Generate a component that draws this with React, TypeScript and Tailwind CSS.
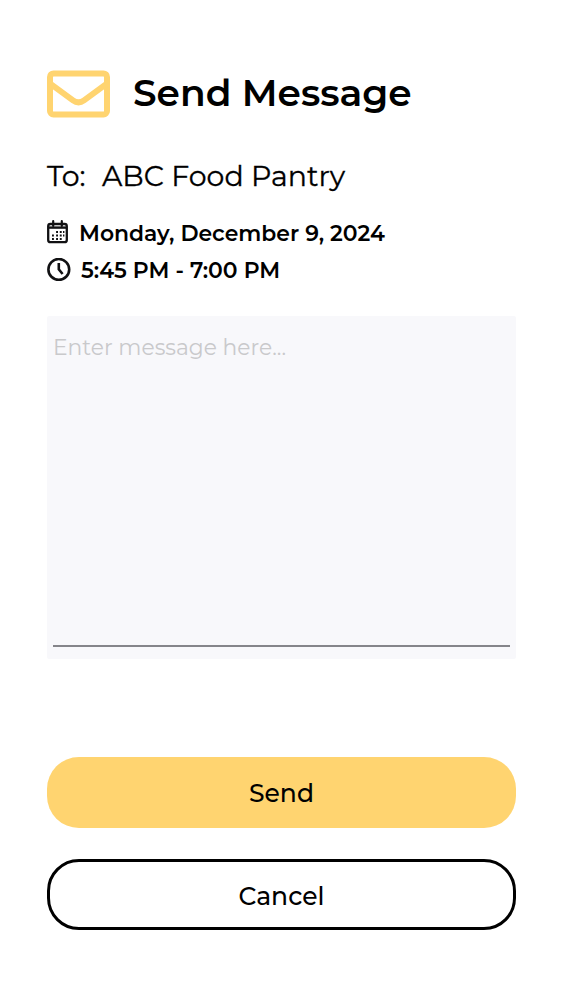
import React, { useState } from "react";

function EnvelopeIcon() {
  return (
    <svg className="h-[48px] w-[63px] shrink-0" viewBox="0 0 63 48" fill="none" stroke="#ffd470" strokeWidth="6">
      <rect x="3" y="3.4" width="57" height="41" rx="3.5" />
      <path d="M3.5 13.8 L26 30.4 Q31.5 34.4 37 30.4 L59.5 13.8" strokeWidth="6" />
    </svg>
  );
}

function CalendarIcon() {
  return (
    <svg className="h-[24px] w-[21px] shrink-0" viewBox="0 0 21 24" fill="none" stroke="#111113">
      <rect x="1.2" y="4" width="18.6" height="18.2" rx="2.2" strokeWidth="2.3" />
      <path d="M1 7.6 H20" strokeWidth="2.4" />
      <path d="M6.2 1.2 V6 M14.8 1.2 V6" strokeWidth="2.2" strokeLinecap="round" />
      <path
        d="M9.1 12 H11 M12.8 12 H14.7 M16 12 H17.4 M5 15.5 H6.9 M9.1 15.5 H11 M12.8 15.5 H14.7 M16 15.5 H17.4 M5 19 H6.9 M9.1 19 H11 M12.8 19 H14.7"
        strokeWidth="1.9"
      />
    </svg>
  );
}

function ClockIcon() {
  return (
    <svg className="h-[24px] w-[24px] shrink-0" viewBox="0 0 24 24" fill="none" stroke="#111113" strokeWidth="2.6">
      <circle cx="11.8" cy="11.4" r="10.4" />
      <path d="M11.8 5 V11.4 L15.6 16" strokeWidth="2.6" />
    </svg>
  );
}

export default function App() {
  const [message, setMessage] = useState("");

  const handleSubmit = (e: React.FormEvent) => {
    e.preventDefault();
  };

  return (
    <div className="min-h-[1000px] w-full bg-white px-[47px] pt-[70px] font-['Montserrat','Inter',sans-serif] text-black">
      <div className="flex h-[48px] items-center">
        <EnvelopeIcon />
        <h1 className="ml-[23px] -mt-[2px] whitespace-nowrap text-[37.5px] leading-[48px] font-semibold">
          Send Message
        </h1>
      </div>

      <div className="mt-[38px] flex h-[40px] items-center whitespace-nowrap text-[28.4px] leading-[40px] [-webkit-text-stroke:0.3px_black]">
        <span className="w-[55px] shrink-0">To:</span>
        <span>ABC Food Pantry</span>
      </div>

      <div className="mt-[21px] flex h-[30px] items-center whitespace-nowrap text-[21.9px] leading-[30px] font-semibold">
        <CalendarIcon />
        <span className="mt-[2px] ml-[11px]">Monday, December 9, 2024</span>
      </div>
      <div className="mt-[8px] flex h-[30px] items-center whitespace-nowrap text-[21.9px] leading-[30px] font-semibold">
        <ClockIcon />
        <span className="ml-[10px]">5:45 PM - 7:00 PM</span>
      </div>

      <form onSubmit={handleSubmit}>
        <div className="mt-[31px] h-[343px] w-[469px] rounded-[2px] bg-[#f8f8fb] px-[6px] pt-[16px]">
          <textarea
            value={message}
            onChange={(e) => setMessage(e.target.value)}
            placeholder="Enter message here..."
            className="block h-[315px] w-full resize-none border-b-2 border-[#85858a] text-[21.8px] leading-[30px] placeholder:text-[#c9c9cb] focus:outline-none"
          />
        </div>

        <button
          type="submit"
          className="mt-[98px] block h-[71px] w-[469px] rounded-[32px] bg-[#ffd470] pt-[2px] text-[25px] font-medium"
        >
          Send
        </button>
        <button
          type="button"
          onClick={() => setMessage("")}
          className="mt-[31px] block h-[71px] w-[469px] rounded-[32px] border-[3px] border-black pt-[4px] text-[25px] font-medium"
        >
          Cancel
        </button>
      </form>
    </div>
  );
}
